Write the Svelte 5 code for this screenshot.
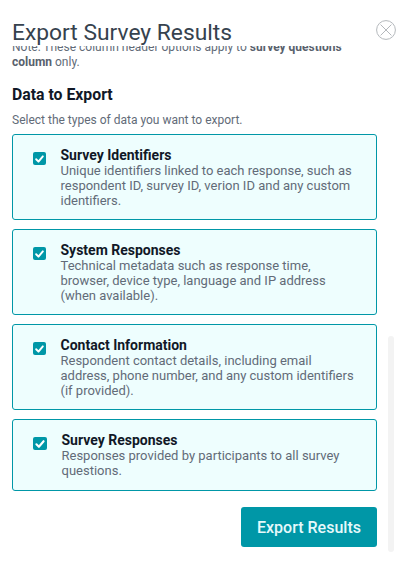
<script>
  const cards = [
    { title: 'Survey Identifiers', text: 'Unique identifiers linked to each response, such as respondent ID, survey ID, verion ID and any custom identifiers.' },
    { title: 'System Responses', text: 'Technical metadata such as response time, browser, device type, language and IP address (when available).' },
    { title: 'Contact Information', text: 'Respondent contact details, including email address, phone number, and any custom identifiers (if provided).' },
    { title: 'Survey Responses', text: 'Responses provided by participants to all survey questions.', last: true }
  ];
</script>

<div class="modal">
  <header class="head">
    <h1>Export Survey Results</h1>
    <svg class="close" width="20" height="20" viewBox="0 0 20 20" fill="none" stroke="#b4b8bc" stroke-width="1">
      <circle cx="10" cy="10" r="9.4" />
      <path d="M4.6 4.6 15.4 15.4M15.4 4.6 4.6 15.4" />
    </svg>
  </header>
  <div class="body">
    <p class="note">Note: These column header options apply to <b>survey questions column</b> only.</p>
    <h2>Data to Export</h2>
    <p class="sub">Select the types of data you want to export.</p>
    <div class="cards">
      {#each cards as c}
        <div class="card" class:last={c.last}>
          <span class="box">
            <svg viewBox="0 0 14 14" width="14" height="14" fill="none" stroke="#fff" stroke-width="2.1" stroke-linecap="round" stroke-linejoin="round">
              <path d="M3.4 7.3 5.9 9.8 10.6 4.2" />
            </svg>
          </span>
          <div class="copy">
            <h3>{c.title}</h3>
            <p>{c.text}</p>
          </div>
        </div>
      {/each}
    </div>
    <div class="foot">
      <button type="button">Export Results</button>
    </div>
  </div>
  <div class="track"></div>
</div>

<style>
  :global(body) {
    margin: 0;
    background: #fff;
  }
  .modal {
    position: relative;
    width: 405px;
    height: 563px;
    overflow: hidden;
    background: #fff;
    font-family: Roboto, "Liberation Sans", sans-serif;
    -webkit-font-smoothing: antialiased;
  }
  .head {
    display: flex;
    justify-content: space-between;
    align-items: flex-start;
    height: 46px;
    padding: 20px 9px 0 12px;
    box-sizing: border-box;
  }
  h1 {
    margin: 0;
    font-size: 22.8px;
    line-height: 26px;
    font-weight: 400;
    color: #36424e;
  }
  .close {
    display: block;
  }
  .body {
    height: 517px;
    overflow: hidden;
    padding: 0 28px 0 12px;
  }
  .note {
    margin: -6px 0 0;
    font-size: 12px;
    line-height: 15px;
    color: #626b78;
  }
  .note b {
    font-weight: 700;
    color: #58616d;
  }
  h2 {
    margin: 15px 0 0;
    font-size: 15.8px;
    line-height: 20px;
    font-weight: 700;
    color: #111827;
  }
  .sub {
    margin: 7px 0 0;
    font-size: 12px;
    line-height: 16px;
    color: #626b78;
  }
  .cards {
    display: flex;
    flex-direction: column;
    gap: 9px;
    margin-top: 6px;
  }
  .card {
    display: flex;
    align-items: flex-start;
    box-sizing: border-box;
    width: 365px;
    height: 86px;
    padding: 13px 0 0 20px;
    background: #eefefe;
    border: 1px solid #0097a7;
    border-radius: 3px;
  }
  .card.last {
    height: 72px;
  }
  .box {
    flex: none;
    display: flex;
    align-items: center;
    justify-content: center;
    width: 13px;
    height: 13px;
    margin-top: 4px;
    background: #0097a7;
    border-radius: 2px;
  }
  .card.last .box {
    width: 14px;
  }
  .copy {
    margin-left: 14.5px;
    width: 298px;
  }
  h3 {
    margin: 0;
    font-size: 14px;
    line-height: 15px;
    font-weight: 700;
    color: #111827;
  }
  .copy p {
    margin: 0;
    font-size: 13px;
    line-height: 15px;
    color: #626b78;
  }
  .foot {
    display: flex;
    justify-content: flex-end;
    width: 365px;
    margin-top: 16px;
  }
  button {
    width: 136px;
    height: 40px;
    padding: 0;
    border: 0;
    border-radius: 3px;
    background: #0097a7;
    color: #e6f9fb;
    font: 500 16px Roboto, "Liberation Sans", sans-serif;
  }
  .track {
    position: absolute;
    left: 388px;
    top: 336px;
    width: 6px;
    height: 216px;
    border-radius: 3px;
    background: #f3f3f3;
  }
</style>
